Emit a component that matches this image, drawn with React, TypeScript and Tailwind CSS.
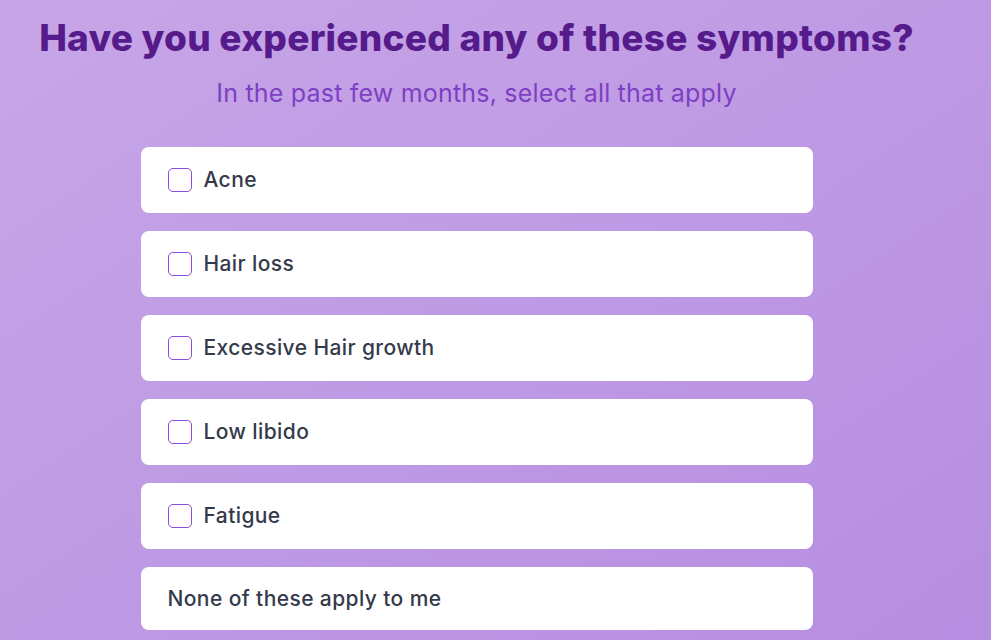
import React from 'react';

const symptoms = ['Acne', 'Hair loss', 'Excessive Hair growth', 'Low libido', 'Fatigue'];

export default function App() {
  return (
    <div className="min-h-screen w-full bg-gradient-to-br from-[#c7a6e7] to-[#b68de1] font-['Inter','Liberation_Sans',sans-serif] overflow-hidden">
      <div className="w-[953px] flex flex-col items-center pt-4 pb-10">
        <h1 className="text-[37px] leading-[44px] font-extrabold text-[#561b8b] tracking-[0.25px] whitespace-nowrap">
          Have you experienced any of these symptoms?
        </h1>
        <p className="mt-[17px] text-[25px] leading-[32px] text-[#7d3fc3] tracking-[0.2px] whitespace-nowrap">
          In the past few months, select all that apply
        </p>

        <div className="mt-[38px] w-[672px] flex flex-col gap-[18px]">
          {symptoms.map((s) => (
            <label
              key={s}
              className="h-[66px] bg-white rounded-lg flex items-center pl-[27px] gap-3 cursor-pointer"
            >
              <span className="w-6 h-6 rounded-[5px] border-[1.5px] border-[#8a4ae6] bg-white shrink-0" />
              <span className="text-[21px] font-medium tracking-[0.4px] text-[#343a4b]">{s}</span>
            </label>
          ))}
          <div className="h-[63px] bg-white rounded-lg flex items-center pl-[27px]">
            <span className="text-[21px] font-medium tracking-[0.4px] text-[#343a4b]">None of these apply to me</span>
          </div>
        </div>
      </div>
    </div>
  );
}
